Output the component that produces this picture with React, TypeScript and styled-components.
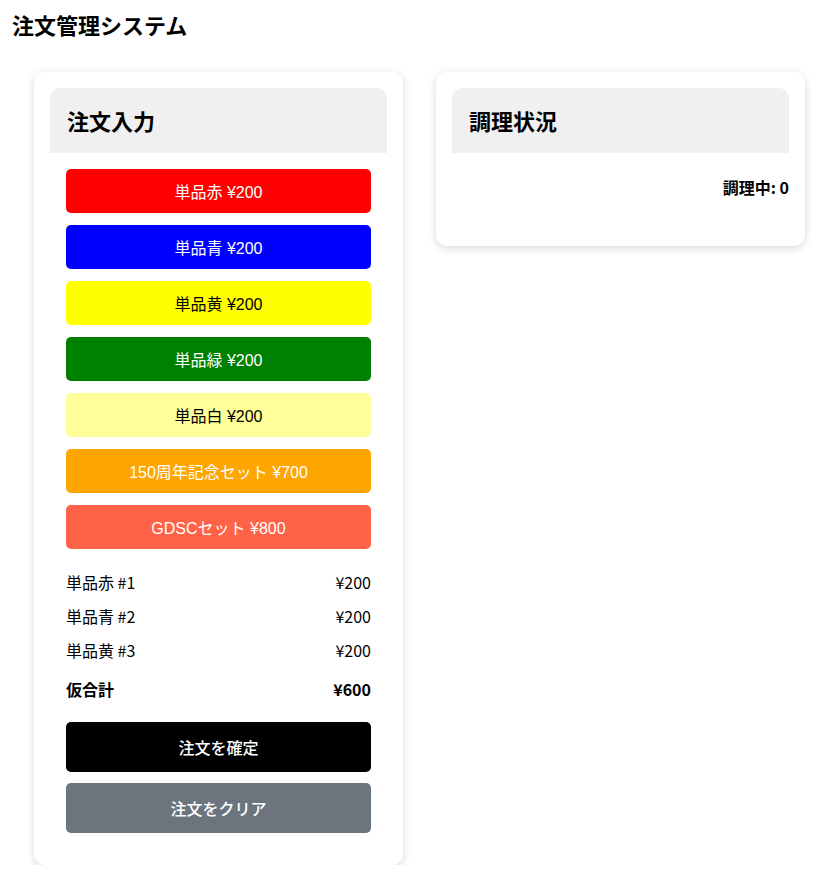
import React from "react";
import styled, { createGlobalStyle } from "styled-components";

const Global = createGlobalStyle`
  body {
    margin: 8px;
    font-family: "Noto Sans CJK JP", "Noto Sans", sans-serif;
    color: #000;
    background: #fff;
  }
`;

const Title = styled.h1`
  margin: 0 0 0 4px;
  font-size: 22px;
  line-height: 32px;
  font-weight: 700;
`;

const Layout = styled.div`
  display: flex;
  align-items: flex-start;
  gap: 33px;
  margin-top: 32px;
  padding-left: 26px;
`;

const Card = styled.section`
  width: 369px;
  box-sizing: border-box;
  padding: 16px;
  background: #fff;
  border-radius: 11px;
  box-shadow: 0 2px 8px rgba(0, 0, 0, 0.16);
`;

const CardHeader = styled.div`
  background: #f0f0f0;
  border-radius: 10px 10px 0 0;
  padding: 16px 17px;
`;

const CardTitle = styled.h2`
  margin: 0;
  font-size: 22px;
  line-height: 33px;
  font-weight: 700;
`;

const CardBody = styled.div`
  padding: 16px;
`;

const MenuList = styled.div`
  display: flex;
  flex-direction: column;
  gap: 12px;
`;

const MenuButton = styled.button<{ $bg: string; $fg: string }>`
  display: block;
  width: 100%;
  height: 44px;
  border: none;
  border-radius: 5px;
  background: ${(p) => p.$bg};
  color: ${(p) => p.$fg};
  font-family: "Liberation Sans", "Noto Sans CJK JP", sans-serif;
  font-size: 16px;
  cursor: pointer;
`;

const OrderList = styled.ul`
  list-style: none;
  margin: 16px 0 0;
  padding: 0;
`;

const OrderRow = styled.li<{ $bold?: boolean }>`
  display: flex;
  justify-content: space-between;
  align-items: center;
  height: 34px;
  font-size: 16px;
  font-weight: ${(p) => (p.$bold ? 700 : 400)};
  margin-top: ${(p) => (p.$bold ? "5px" : "0")};
`;

const Actions = styled.div`
  display: flex;
  flex-direction: column;
  gap: 11px;
  margin-top: 16px;
`;

const ActionButton = styled.button<{ $bg: string }>`
  width: 100%;
  height: 50px;
  border: none;
  border-radius: 5px;
  background: ${(p) => p.$bg};
  color: #fff;
  font-family: "Noto Sans CJK JP", sans-serif;
  font-size: 16px;
  font-weight: 500;
  cursor: pointer;
`;

const Status = styled.p`
  margin: 0;
  padding: 23px 0 31px;
  text-align: right;
  font-size: 16px;
  line-height: 23px;
  font-weight: 700;
`;

const menu = [
  { label: "単品赤 ¥200", bg: "#ff0000", fg: "#fff" },
  { label: "単品青 ¥200", bg: "#0000ff", fg: "#fff" },
  { label: "単品黄 ¥200", bg: "#ffff00", fg: "#000" },
  { label: "単品緑 ¥200", bg: "#008000", fg: "#fff" },
  { label: "単品白 ¥200", bg: "#ffff99", fg: "#000" },
  { label: "150周年記念セット ¥700", bg: "#ffa500", fg: "#fff" },
  { label: "GDSCセット ¥800", bg: "#ff6347", fg: "#fff" },
];

const orders = [
  { name: "単品赤 #1", price: "¥200" },
  { name: "単品青 #2", price: "¥200" },
  { name: "単品黄 #3", price: "¥200" },
];

export default function App() {
  return (
    <>
      <Global />
      <Title>注文管理システム</Title>
      <Layout>
        <Card>
          <CardHeader>
            <CardTitle>注文入力</CardTitle>
          </CardHeader>
          <CardBody>
            <MenuList>
              {menu.map((m) => (
                <MenuButton key={m.label} $bg={m.bg} $fg={m.fg}>
                  {m.label}
                </MenuButton>
              ))}
            </MenuList>
            <OrderList>
              {orders.map((o) => (
                <OrderRow key={o.name}>
                  <span>{o.name}</span>
                  <span>{o.price}</span>
                </OrderRow>
              ))}
              <OrderRow $bold>
                <span>仮合計</span>
                <span>¥600</span>
              </OrderRow>
            </OrderList>
            <Actions>
              <ActionButton $bg="#000">注文を確定</ActionButton>
              <ActionButton $bg="#6c757d">注文をクリア</ActionButton>
            </Actions>
          </CardBody>
        </Card>
        <Card>
          <CardHeader>
            <CardTitle>調理状況</CardTitle>
          </CardHeader>
          <Status>調理中: 0</Status>
        </Card>
      </Layout>
    </>
  );
}
